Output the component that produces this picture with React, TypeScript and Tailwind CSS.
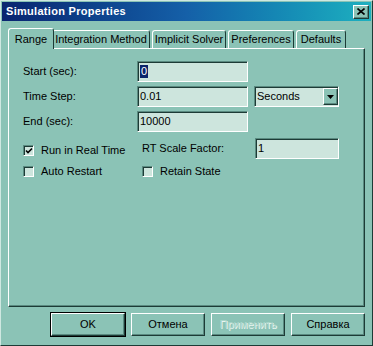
import { FC, ReactNode } from "react";

const font = { fontFamily: '"Liberation Sans", Arial, sans-serif' };

// classic 3d borders
const raised = "border border-t-white border-l-white border-r-[#1d3b36] border-b-[#1d3b36] shadow-[inset_-1px_-1px_0_#5a8a80]";
const sunken = "border border-t-[#5a8a80] border-l-[#5a8a80] border-r-white border-b-white shadow-[inset_1px_1px_0_#1d3b36]";

const Tab: FC<{ label: string; w: string; active?: boolean }> = ({ label, w, active }) => (
  <div
    className={`${w} ${active ? "h-[21px] -mr-[2px] z-10 bg-[#8bc3b6] -mb-[1px]" : "h-[18px] mr-[2px]"} flex items-center justify-center whitespace-nowrap border border-b-0 border-t-white border-l-white border-r-[#1d3b36] rounded-t-[3px] text-[11px] leading-none text-black`}
  >
    {label}
  </div>
);

const Field: FC<{ w: string; children?: ReactNode }> = ({ w, children }) => (
  <div className={`${w} h-[21px] ${sunken} bg-[#cde5dd] flex items-center pl-[2px] text-[11px] text-black`}>
    {children}
  </div>
);

const Check: FC<{ label: string; checked?: boolean }> = ({ label, checked }) => (
  <div className="h-[13px] flex items-center gap-[7px] text-[11px] leading-none text-black whitespace-nowrap">
    <div className={`w-[11px] h-[11px] ${sunken} bg-[#cde5dd] flex items-center justify-center`}>
      {checked && (
        <svg width="8" height="8" viewBox="0 0 8 8">
          <path d="M1 3.5 L3 5.5 L7 1.5" stroke="black" strokeWidth="1.6" fill="none" />
        </svg>
      )}
    </div>
    {label}
  </div>
);

const Button: FC<{ label: string; def?: boolean; disabled?: boolean }> = ({ label, def, disabled }) => (
  <div
    className={`w-[74px] h-[23px] flex items-center justify-center text-[11px] ${def ? "outline outline-1 outline-black" : ""} ${raised} ${disabled ? "text-[#a9d6ca] [text-shadow:1px_1px_0_#e8f5f1]" : "text-black"}`}
  >
    {label}
  </div>
);

const App: FC = () => {
  return (
    <div style={font} className="w-[373px] h-[346px] bg-[#8bc3b6] flex flex-col border border-t-[#cfe8e1] border-l-[#cfe8e1] border-r-[#1d3b36] border-b-[#1d3b36] overflow-hidden select-none">
      {/* title bar */}
      <div className="h-[19px] mx-[1px] mt-[1px] flex items-center justify-between pl-[4px] pr-[2px] bg-gradient-to-r from-[#0a2470] via-[#1560a8] to-[#1eb0bf]">
        <span className="text-white font-bold text-[11px] tracking-[0.3px]">Simulation Properties</span>
        <div className={`w-[16px] h-[14px] bg-[#8bc3b6] ${raised} flex items-center justify-center`}>
          <svg width="8" height="7" viewBox="0 0 8 7">
            <path d="M0.5 0.5 L7.5 6.5 M7.5 0.5 L0.5 6.5" stroke="black" strokeWidth="1.6" />
          </svg>
        </div>
      </div>

      {/* tabs */}
      <div className="flex items-end ml-[7px] mt-[6px] h-[21px]">
        <Tab label="Range" w="w-[46px]" active />
        <Tab label="Integration Method" w="w-[98px]" />
        <Tab label="Implicit Solver" w="w-[74px]" />
        <Tab label="Preferences" w="w-[66px]" />
        <Tab label="Defaults" w="w-[50px]" />
      </div>

      {/* panel */}
      <div className="mx-[7px] h-[259px] border border-t-white border-l-white border-r-[#1d3b36] border-b-[#1d3b36] shadow-[inset_-1px_-1px_0_#5a8a80] pl-[14px] pt-[12px]">
        <div className="flex flex-col gap-[4px]">
          <div className="flex items-center">
            <span className="w-[114px] text-[11px]">Start (sec):</span>
            <Field w="w-[111px]">
              <span className="bg-[#0a246a] text-white px-[1px] leading-[13px]">0</span>
            </Field>
          </div>
          <div className="flex items-center">
            <span className="w-[114px] text-[11px]">Time Step:</span>
            <Field w="w-[111px]">0.01</Field>
            <div className={`ml-[6px] w-[85px] h-[21px] ${sunken} bg-[#cde5dd] flex items-center justify-between pl-[2px] text-[11px]`}>
              Seconds
              <div className={`w-[15px] h-[17px] bg-[#8bc3b6] ${raised} flex items-center justify-center`}>
                <svg width="7" height="4" viewBox="0 0 7 4">
                  <path d="M0 0 H7 L3.5 4 Z" fill="black" />
                </svg>
              </div>
            </div>
          </div>
          <div className="flex items-center">
            <span className="w-[114px] text-[11px]">End (sec):</span>
            <Field w="w-[111px]">10000</Field>
          </div>
        </div>

        <div className="flex mt-[6px]">
          <div className="w-[119px] flex flex-col gap-[8px] pt-[6px]">
            <Check label="Run in Real Time" checked />
            <Check label="Auto Restart" />
          </div>
          <div className="flex flex-col gap-[6px]">
            <div className="flex items-center">
              <span className="w-[113px] text-[11px]">RT Scale Factor:</span>
              <Field w="w-[84px]">1</Field>
            </div>
            <Check label="Retain State" />
          </div>
        </div>
      </div>

      {/* buttons */}
      <div className="flex justify-end gap-[6px] mt-[6px] pr-[7px]">
        <Button label="OK" def />
        <Button label="Отмена" />
        <Button label="Применить" disabled />
        <Button label="Справка" />
      </div>
    </div>
  );
};

export default App;
